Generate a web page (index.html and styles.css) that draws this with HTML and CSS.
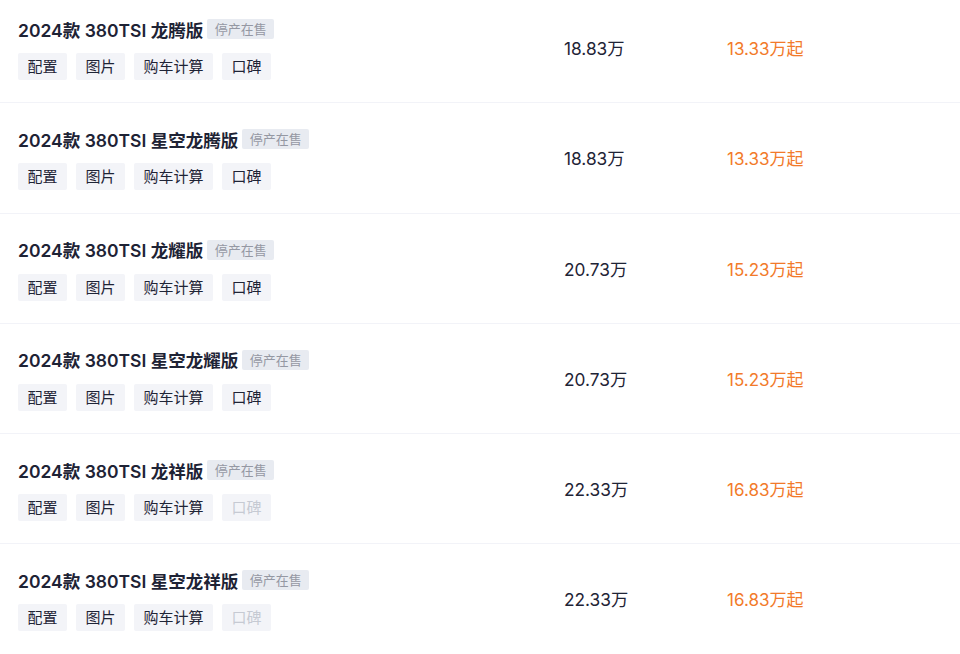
FILE: index.html
```html
<!DOCTYPE html>
<html lang="zh-CN">
<head>
<meta charset="utf-8">
<link rel="stylesheet" href="styles.css">
</head>
<body>
<div class="list">
  <div class="row">
    <div class="info">
      <div class="title"><span class="name">2024款 380TSI 龙腾版</span><span class="status">停产在售</span></div>
      <div class="tags"><span class="tag">配置</span><span class="tag">图片</span><span class="tag">购车计算</span><span class="tag">口碑</span></div>
    </div>
    <div class="price">18.83万</div>
    <div class="deal">13.33万起</div>
  </div>
  <div class="row">
    <div class="info">
      <div class="title"><span class="name">2024款 380TSI 星空龙腾版</span><span class="status">停产在售</span></div>
      <div class="tags"><span class="tag">配置</span><span class="tag">图片</span><span class="tag">购车计算</span><span class="tag">口碑</span></div>
    </div>
    <div class="price">18.83万</div>
    <div class="deal">13.33万起</div>
  </div>
  <div class="row">
    <div class="info">
      <div class="title"><span class="name">2024款 380TSI 龙耀版</span><span class="status">停产在售</span></div>
      <div class="tags"><span class="tag">配置</span><span class="tag">图片</span><span class="tag">购车计算</span><span class="tag">口碑</span></div>
    </div>
    <div class="price">20.73万</div>
    <div class="deal">15.23万起</div>
  </div>
  <div class="row">
    <div class="info">
      <div class="title"><span class="name">2024款 380TSI 星空龙耀版</span><span class="status">停产在售</span></div>
      <div class="tags"><span class="tag">配置</span><span class="tag">图片</span><span class="tag">购车计算</span><span class="tag">口碑</span></div>
    </div>
    <div class="price">20.73万</div>
    <div class="deal">15.23万起</div>
  </div>
  <div class="row">
    <div class="info">
      <div class="title"><span class="name">2024款 380TSI 龙祥版</span><span class="status">停产在售</span></div>
      <div class="tags"><span class="tag">配置</span><span class="tag">图片</span><span class="tag">购车计算</span><span class="tag disabled">口碑</span></div>
    </div>
    <div class="price">22.33万</div>
    <div class="deal">16.83万起</div>
  </div>
  <div class="row">
    <div class="info">
      <div class="title"><span class="name">2024款 380TSI 星空龙祥版</span><span class="status">停产在售</span></div>
      <div class="tags"><span class="tag">配置</span><span class="tag">图片</span><span class="tag">购车计算</span><span class="tag disabled">口碑</span></div>
    </div>
    <div class="price">22.33万</div>
    <div class="deal">16.83万起</div>
  </div>
</div>
</body>
</html>
```

FILE: styles.css
```css
* { box-sizing: border-box; }
html, body { margin: 0; padding: 0; background: #fff; }
body {
  font-family: Inter, "Noto Sans CJK SC", sans-serif;
  color: #1f2436;
  overflow: hidden;
}
.list {
  margin-top: -7px;
}
.row {
  display: grid;
  grid-template-columns: 546px 163px 1fr;
  align-items: center;
  height: 110.25px;
  padding-left: 18px;
  border-bottom: 1px solid #f2f3f8;
}
.info {
  display: flex;
  flex-direction: column;
  gap: 10px;
}
.title {
  display: flex;
  align-items: center;
  height: 28px;
}
.name {
  font-size: 17.5px;
  font-weight: 600;
  color: #1e2335;
}
.status {
  margin-left: 4px;
  height: 20px;
  line-height: 20px;
  padding: 0 7.5px;
  font-size: 13px;
  color: #9598a3;
  background: #e8ebf1;
  border-radius: 2px;
}
.tags {
  display: flex;
  gap: 9px;
}
.tag {
  height: 27px;
  line-height: 27px;
  padding: 0 9.5px;
  font-size: 15px;
  color: #1f2436;
  background: #f3f4f8;
  border-radius: 2px;
}
.tag.disabled {
  color: #c6cad3;
}
.price {
  font-size: 17.3px;
  color: #1f2436;
}
.deal {
  font-size: 17px;
  color: #f27a2a;
}
```
